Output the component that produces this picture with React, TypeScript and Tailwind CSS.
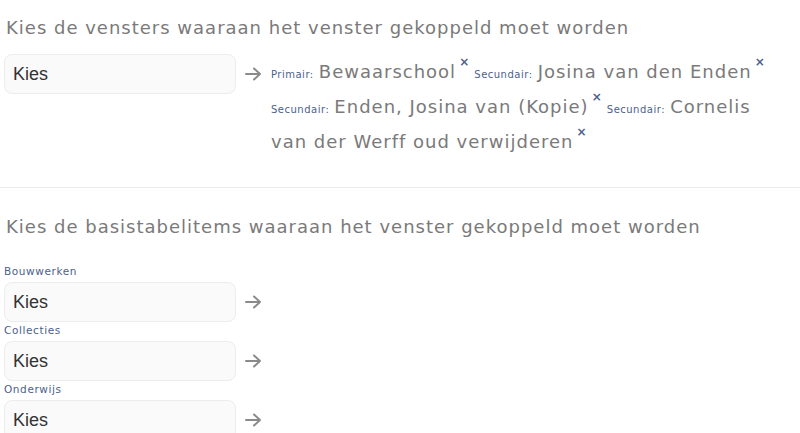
import React from "react";

const gothic = { fontFamily: '"Century Gothic", "URW Gothic", "DejaVu Sans", sans-serif' };

const Arrow = () => (
  <svg width="17" height="14" viewBox="0 0 17 14" className="shrink-0">
    <path d="M1 7h14M9 1.5 15 7l-6 5.5" fill="none" stroke="#8a8a8a" strokeWidth="2" strokeLinecap="round" strokeLinejoin="round" />
  </svg>
);

const Kies = () => (
  <div className="w-[232px] h-[40px] shrink-0 rounded-lg border border-[#ececec] bg-[#fafafa] flex items-center pl-[8px] text-[18px] text-[#333] font-['Liberation_Sans',Arial,sans-serif]">
    Kies
  </div>
);

interface TagProps {
  kind: string;
  name: string;
}

const Tag = ({ kind, name }: TagProps) => (
  <>
    <span className="text-[10px] leading-none tracking-[0.5px] text-[#4c5f8c]">{kind}:</span>{" "}
    <span className="text-[18px] leading-none tracking-[1px] text-[#7a7a7a]">{name}</span>
    <span className="relative -top-[12px] ml-[3px] text-[12px] leading-none font-bold text-[#4c5f8c]">×</span>{" "}
  </>
);

const Basis = ({ label }: { label: string }) => (
  <div>
    <div className="mb-[4px] text-[10.5px] leading-[14px] tracking-[0.6px] text-[#4c5f8c]">{label}</div>
    <div className="flex items-center gap-[9px]">
      <Kies />
      <Arrow />
    </div>
  </div>
);

export default function App() {
  const tags = [
    { kind: "Primair", name: "Bewaarschool" },
    { kind: "Secundair", name: "Josina van den Enden" },
    { kind: "Secundair", name: "Enden, Josina van (Kopie)" },
    { kind: "Secundair", name: "Cornelis van der Werff oud verwijderen" }
  ];

  return (
    <div className="w-[800px] h-[433px] overflow-hidden bg-white" style={gothic}>
      <section className="pt-[17px] px-[4px]">
        <h2 className="pl-[2px] text-[18px] leading-[22px] tracking-[1px] text-[#7a7a7a]">
          Kies de vensters waaraan het venster gekoppeld moet worden
        </h2>
        <div className="mt-[15px] flex items-start">
          <Kies />
          <div className="mt-[13px] ml-[9px]">
            <Arrow />
          </div>
          <div className="flex-1 ml-[9px] pr-[10px] pt-[1px] leading-[35px]">
            {tags.map((t, i) => (
              <Tag key={i} kind={t.kind} name={t.name} />
            ))}
          </div>
        </div>
      </section>
      <div className="mt-[27px] border-t border-[#ebebeb]" />
      <section className="pt-[28px] px-[4px]">
        <h2 className="pl-[2px] text-[18px] leading-[22px] tracking-[1px] text-[#7a7a7a]">
          Kies de basistabelitems waaraan het venster gekoppeld moet worden
        </h2>
        <div className="mt-[26px] flex flex-col gap-[1px]">
          <Basis label="Bouwwerken" />
          <Basis label="Collecties" />
          <Basis label="Onderwijs" />
        </div>
      </section>
    </div>
  );
}
